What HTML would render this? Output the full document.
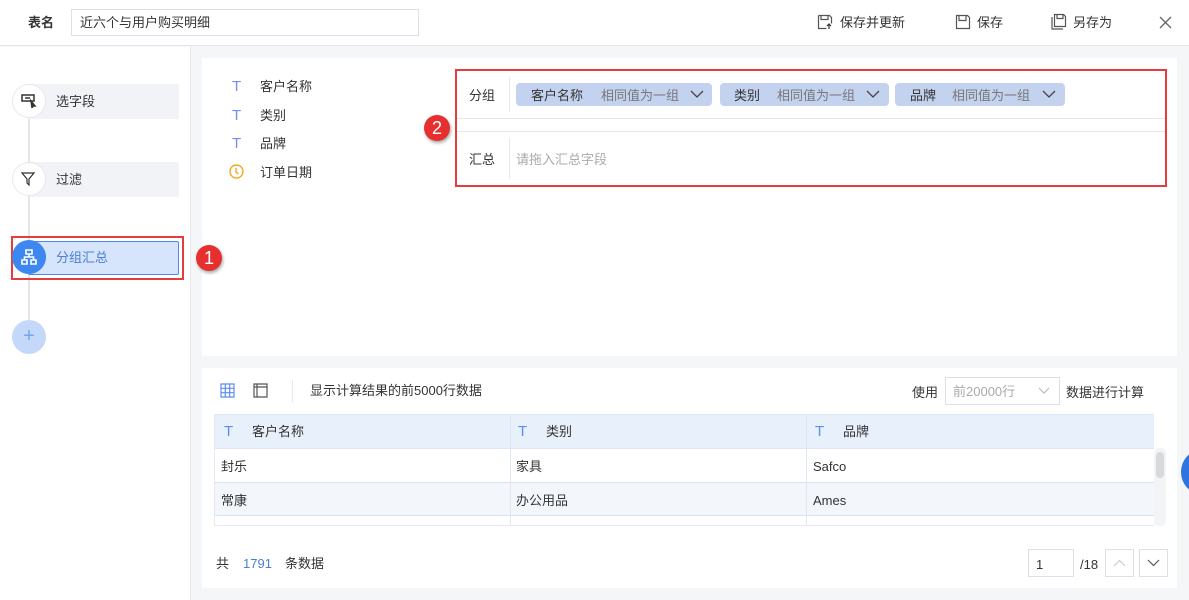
<!DOCTYPE html>
<html><head><meta charset="utf-8"><style>
*{box-sizing:border-box;margin:0;padding:0}
body{width:1189px;height:600px;overflow:hidden;background:#f5f6f8;font-family:"Liberation Sans","Noto Sans CJK SC",sans-serif;font-size:13px;color:#333;position:relative}
.a{position:absolute}
.t{position:absolute;white-space:nowrap;line-height:16px;margin-top:1px}
</style></head><body>
<div class="a" style="left:0;top:0;width:1189px;height:46px;background:#fff;border-bottom:1px solid #e4e6eb"></div>
<div class="t" style="left:28px;top:14px;font-weight:bold;color:#333">表名</div>
<div class="a" style="left:71px;top:9px;width:348px;height:27px;border:1px solid #dcdfe6;background:#fff"></div>
<div class="t" style="left:80px;top:14px;color:#333">近六个与用户购买明细</div>
<svg class="a" style="left:817px;top:14px" width="16" height="16" fill="none" stroke="#555" stroke-width="1.2"><path d="M1.5 1.5h11l2 2v6M1.5 1.5v13h8M4 1.5v4h7v-4"/><path d="M12 15v-5M10 12l2-2 2 2" stroke="#333"/></svg>
<div class="t" style="left:840px;top:14px">保存并更新</div>
<svg class="a" style="left:955px;top:14px" width="16" height="16" fill="none" stroke="#555" stroke-width="1.2"><path d="M1.5 1.5h11l2 2v11h-13zM4 1.5v5h7v-5"/></svg>
<div class="t" style="left:977px;top:14px">保存</div>
<svg class="a" style="left:1050px;top:13px" width="18" height="18" fill="none" stroke="#555" stroke-width="1.2"><path d="M4.5 1.5h9l2 2v10h-11zM7 1.5v4h6v-4M2 4v12h11"/></svg>
<div class="t" style="left:1073px;top:14px">另存为</div>
<svg class="a" style="left:1159px;top:16px" width="13" height="13" stroke="#666" stroke-width="1.3"><path d="M1 1l11 11M12 1L1 12"/></svg>

<div class="a" style="left:0;top:47px;width:191px;height:553px;background:#fff;border-right:1px solid #e4e6eb"></div>
<div class="a" style="left:28px;top:117px;width:2px;height:205px;background:#e3e5ea"></div>
<div class="a" style="left:28px;top:84px;width:151px;height:35px;background:#f2f3f7;border-radius:2px"></div>
<div class="a" style="left:12px;top:84px;width:34px;height:34px;border-radius:50%;background:#fff;border:1px solid #e8e8ec"></div>
<svg class="a" style="left:21px;top:94px" width="16" height="14" fill="none" stroke="#333" stroke-width="1.5"><path d="M1 1h12v6H1z"/><path d="M4 4h5" /><path d="M10 7l4 5-2 0-1 2z" fill="#333"/></svg>
<div class="t" style="left:56px;top:93px">选字段</div>
<div class="a" style="left:28px;top:162px;width:151px;height:35px;background:#f2f3f7;border-radius:2px"></div>
<div class="a" style="left:12px;top:162px;width:34px;height:34px;border-radius:50%;background:#fff;border:1px solid #e8e8ec"></div>
<svg class="a" style="left:21px;top:172px" width="14" height="14" fill="none" stroke="#333" stroke-width="1.2"><path d="M1 1h12L8 7v6L6 11V7z"/></svg>
<div class="t" style="left:56px;top:171px">过滤</div>
<div class="a" style="left:11px;top:236px;width:173px;height:44px;border:2px solid #e53c3c"></div>
<div class="a" style="left:28px;top:241px;width:151px;height:34px;background:#d6e5fb;border:1px solid #4a8ae8;border-radius:2px"></div>
<div class="a" style="left:12px;top:240px;width:34px;height:34px;border-radius:50%;background:#3d87f0"></div>
<svg class="a" style="left:21px;top:249px" width="16" height="16" fill="none" stroke="#fff" stroke-width="1.6"><path d="M5 1h6v4H5zM1 11h5v4H1zM10 11h5v4h-5zM8 5v3M3.5 11V8h9v3"/></svg>
<div class="t" style="left:56px;top:249px;color:#4a7fd6">分组汇总</div>
<div class="a" style="left:12px;top:320px;width:34px;height:34px;border-radius:50%;background:#c4d9fa;color:#7aa3e8;font-size:20px;text-align:center;line-height:32px">+</div>

<div class="a" style="left:202px;top:58px;width:975px;height:298px;background:#fff"></div>
<div class="a" style="left:196px;top:245px;width:26px;height:26px;border-radius:50%;background:#e5302f;box-shadow:1px 2px 3px rgba(0,0,0,.35);color:#fff;font-size:18px;text-align:center;line-height:26px">1</div>
<div class="t" style="left:232px;top:78px;color:#7b8cf0;font-size:15px">T</div><div class="t" style="left:260px;top:78px">客户名称</div>
<div class="t" style="left:232px;top:107px;color:#7b8cf0;font-size:15px">T</div><div class="t" style="left:260px;top:107px">类别</div>
<div class="t" style="left:232px;top:135px;color:#7b8cf0;font-size:15px">T</div><div class="t" style="left:260px;top:135px">品牌</div>
<svg class="a" style="left:229px;top:164px" width="15" height="15" fill="none" stroke="#f5a623" stroke-width="1.4"><circle cx="7.5" cy="7.5" r="6.5"/><path d="M7 4v4l2.5 2"/></svg>
<div class="t" style="left:260px;top:164px">订单日期</div>
<div class="a" style="left:455px;top:69px;width:712px;height:118px;border:2px solid #e53c3c"></div>
<div class="a" style="left:424px;top:115px;width:26px;height:26px;border-radius:50%;background:#e5302f;box-shadow:1px 2px 3px rgba(0,0,0,.35);color:#fff;font-size:18px;text-align:center;line-height:26px">2</div>
<div class="t" style="left:469px;top:87px">分组</div>
<div class="a" style="left:509px;top:77px;width:1px;height:35px;background:#e8e8ec"></div>
<div class="a" style="left:516px;top:83px;width:196px;height:23px;background:#c3d3ef;border-radius:4px"></div>
<div class="t" style="left:531px;top:87px">客户名称</div><div class="t" style="left:601px;top:87px;color:#777">相同值为一组</div>
<div class="a" style="left:720px;top:83px;width:169px;height:23px;background:#c3d3ef;border-radius:4px"></div>
<div class="t" style="left:734px;top:87px">类别</div><div class="t" style="left:777px;top:87px;color:#777">相同值为一组</div>
<div class="a" style="left:895px;top:83px;width:170px;height:23px;background:#c3d3ef;border-radius:4px"></div>
<div class="t" style="left:910px;top:87px">品牌</div><div class="t" style="left:952px;top:87px;color:#777">相同值为一组</div>
<svg class="a" style="left:690px;top:89px" width="14" height="10" fill="none" stroke="#444" stroke-width="1.3"><path d="M1 2l6 6 6-6"/></svg>
<svg class="a" style="left:866px;top:89px" width="14" height="10" fill="none" stroke="#444" stroke-width="1.3"><path d="M1 2l6 6 6-6"/></svg>
<svg class="a" style="left:1042px;top:89px" width="14" height="10" fill="none" stroke="#444" stroke-width="1.3"><path d="M1 2l6 6 6-6"/></svg>
<div class="a" style="left:457px;top:118px;width:708px;height:1px;background:#e8e8ec"></div>
<div class="a" style="left:457px;top:131px;width:708px;height:1px;background:#e8e8ec"></div>
<div class="t" style="left:469px;top:151px">汇总</div>
<div class="a" style="left:509px;top:139px;width:1px;height:40px;background:#e8e8ec"></div>
<div class="t" style="left:516px;top:151px;color:#aaa">请拖入汇总字段</div>

<div class="a" style="left:202px;top:368px;width:975px;height:220px;background:#fff"></div>
<svg class="a" style="left:220px;top:383px" width="15" height="15" fill="none" stroke="#5b8ef0" stroke-width="1.2"><path d="M1 1h13v13H1zM5.3 1v13M9.7 1v13M1 5.3h13M1 9.7h13"/></svg>
<svg class="a" style="left:253px;top:383px" width="15" height="15" fill="none" stroke="#555" stroke-width="1.2"><path d="M1 1h13v13H1zM4 1v13M1 4h13"/></svg>
<div class="a" style="left:292px;top:380px;width:1px;height:22px;background:#e8e8ec"></div>
<div class="t" style="left:310px;top:382px">显示计算结果的前5000行数据</div>
<div class="t" style="left:912px;top:384px">使用</div>
<div class="a" style="left:945px;top:377px;width:115px;height:28px;border:1px solid #dcdfe6"></div>
<div class="t" style="left:953px;top:383px;color:#aaa">前20000行</div>
<svg class="a" style="left:1038px;top:387px" width="12" height="8" fill="none" stroke="#bbb" stroke-width="1.2"><path d="M1 1l5 5 5-5"/></svg>
<div class="t" style="left:1066px;top:384px">数据进行计算</div>
<div class="a" style="left:214px;top:414px;width:940px;height:34px;background:#e8f0fc;border-top:1px solid #dde6f3"></div>
<div class="a" style="left:214px;top:448px;width:940px;height:34px;background:#fff;border-top:1px solid #dde6f3"></div>
<div class="a" style="left:214px;top:482px;width:940px;height:34px;background:#f3f7fc;border-top:1px solid #d4e3f7;border-bottom:1px solid #d4e3f7"></div>
<div class="a" style="left:214px;top:516px;width:940px;height:10px;background:#fff;border-bottom:1px solid #e6eaf0"></div>
<div class="a" style="left:214px;top:414px;width:1px;height:112px;background:#e6eaf0"></div>
<div class="a" style="left:510px;top:414px;width:1px;height:112px;background:#dde6f3"></div>
<div class="a" style="left:806px;top:414px;width:1px;height:112px;background:#dde6f3"></div>
<div class="a" style="left:1154px;top:448px;width:12px;height:78px;background:#f3f4f6;border-radius:5px"></div>
<div class="a" style="left:1156px;top:452px;width:8px;height:26px;background:#d8d9dc;border-radius:4px"></div>
<div class="t" style="left:224px;top:423px;color:#5b8ef0;font-size:15px">T</div><div class="t" style="left:252px;top:423px">客户名称</div>
<div class="t" style="left:518px;top:423px;color:#5b8ef0;font-size:15px">T</div><div class="t" style="left:546px;top:423px">类别</div>
<div class="t" style="left:815px;top:423px;color:#5b8ef0;font-size:15px">T</div><div class="t" style="left:843px;top:423px">品牌</div>
<div class="t" style="left:221px;top:458px">封乐</div><div class="t" style="left:516px;top:458px">家具</div><div class="t" style="left:813px;top:458px">Safco</div>
<div class="t" style="left:221px;top:492px">常康</div><div class="t" style="left:516px;top:492px">办公用品</div><div class="t" style="left:813px;top:492px">Ames</div>
<div class="t" style="left:216px;top:555px">共</div><div class="t" style="left:243px;top:555px;color:#4a7fd6">1791</div><div class="t" style="left:285px;top:555px">条数据</div>
<div class="a" style="left:1028px;top:549px;width:46px;height:28px;border:1px solid #dcdfe6"></div>
<div class="t" style="left:1036px;top:556px">1</div>
<div class="t" style="left:1080px;top:556px">/18</div>
<div class="a" style="left:1105px;top:549px;width:29px;height:28px;border:1px solid #dcdfe6"></div>
<svg class="a" style="left:1113px;top:559px" width="13" height="8" fill="none" stroke="#ccc" stroke-width="1.2"><path d="M1 7l5.5-5.5L12 7"/></svg>
<div class="a" style="left:1139px;top:549px;width:29px;height:28px;border:1px solid #dcdfe6"></div>
<svg class="a" style="left:1147px;top:559px" width="13" height="8" fill="none" stroke="#555" stroke-width="1.2"><path d="M1 1l5.5 5.5L12 1"/></svg>
<div class="a" style="left:1181px;top:450px;width:40px;height:44px;border-radius:50%;background:#2f74e0"></div>
</body></html>
